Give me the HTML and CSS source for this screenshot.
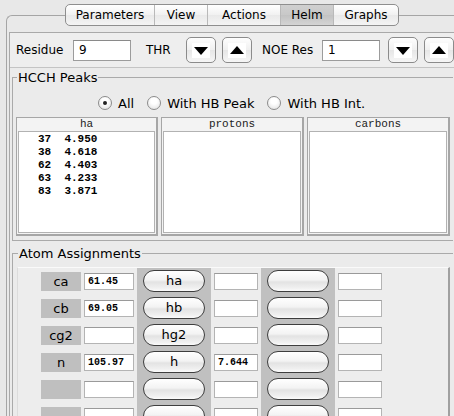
FILE: index.html
```html
<!DOCTYPE html>
<html>
<head>
<meta charset="utf-8">
<link rel="stylesheet" href="styles.css">
</head>
<body>
<div class="app">
  <div class="tabs">
    <div class="tab t-param">Parameters</div>
    <div class="tab t-view">View</div>
    <div class="tab t-act">Actions</div>
    <div class="tab t-helm sel">Helm</div>
    <div class="tab t-graph">Graphs</div>
  </div>
  <div class="pane">
    <div class="inner">
      <div class="resrow">
        <span class="lbl l-res">Residue</span>
        <div class="field big">9</div>
        <span class="lbl l-thr">THR</span>
        <button class="arr"><svg width="18" height="15" viewBox="0 0 18 15"><rect width="18" height="15" fill="#fff"/><polygon points="2,4 16,4 9,12" fill="#000"/></svg></button>
        <button class="arr"><svg width="18" height="15" viewBox="0 0 18 15"><rect width="18" height="15" fill="#fff"/><polygon points="2,11 16,11 9,3" fill="#000"/></svg></button>
        <span class="lbl l-noe">NOE Res</span>
        <div class="field big">1</div>
        <button class="arr arr-wide"><svg width="18" height="15" viewBox="0 0 18 15"><rect width="18" height="15" fill="#fff"/><polygon points="2,4 16,4 9,12" fill="#000"/></svg></button>
        <button class="arr arr-last"><svg width="18" height="15" viewBox="0 0 18 15"><rect width="18" height="15" fill="#fff"/><polygon points="2,11 16,11 9,3" fill="#000"/></svg></button>
      </div>

      <fieldset class="group hcch">
        <legend>HCCH Peaks</legend>
        <div class="radios">
          <label class="opt"><span class="radio on"></span>All</label>
          <label class="opt"><span class="radio"></span>With HB Peak</label>
          <label class="opt"><span class="radio"></span>With HB Int.</label>
        </div>
        <div class="tables">
          <div class="tbl">
            <div class="th">ha</div>
            <div class="list">
              <div class="li">37  4.950</div>
              <div class="li">38  4.618</div>
              <div class="li">62  4.403</div>
              <div class="li">63  4.233</div>
              <div class="li">83  3.871</div>
            </div>
          </div>
          <div class="tbl">
            <div class="th">protons</div>
            <div class="list"></div>
          </div>
          <div class="tbl">
            <div class="th">carbons</div>
            <div class="list"></div>
          </div>
        </div>
      </fieldset>

      <fieldset class="group atoms">
        <legend>Atom Assignments</legend>
        <div class="scroll">
          <div class="agrid">
            <div class="albl">ca</div><div class="cell"><div class="af">61.45</div></div><div class="gcol"><button class="pill">ha</button></div><div class="cell"><div class="af"></div></div><div class="gcol"><button class="pill"></button></div><div class="cell"><div class="af"></div></div>
            <div class="albl">cb</div><div class="cell"><div class="af">69.05</div></div><div class="gcol"><button class="pill">hb</button></div><div class="cell"><div class="af"></div></div><div class="gcol"><button class="pill"></button></div><div class="cell"><div class="af"></div></div>
            <div class="albl">cg2</div><div class="cell"><div class="af"></div></div><div class="gcol"><button class="pill">hg2</button></div><div class="cell"><div class="af"></div></div><div class="gcol"><button class="pill"></button></div><div class="cell"><div class="af"></div></div>
            <div class="albl">n</div><div class="cell"><div class="af">105.97</div></div><div class="gcol"><button class="pill">h</button></div><div class="cell"><div class="af">7.644</div></div><div class="gcol"><button class="pill"></button></div><div class="cell"><div class="af"></div></div>
            <div class="albl"></div><div class="cell"><div class="af"></div></div><div class="gcol"><button class="pill"></button></div><div class="cell"><div class="af"></div></div><div class="gcol"><button class="pill"></button></div><div class="cell"><div class="af"></div></div>
            <div class="albl"></div><div class="cell"><div class="af"></div></div><div class="gcol"><button class="pill"></button></div><div class="cell"><div class="af"></div></div><div class="gcol"><button class="pill"></button></div><div class="cell"><div class="af"></div></div>
          </div>
        </div>
      </fieldset>
    </div>
  </div>
</div>
</body>
</html>
```

FILE: styles.css
```css
* { box-sizing: border-box; }
html, body { margin: 0; padding: 0; }
body {
  width: 454px;
  height: 416px;
  overflow: hidden;
  background: #e8e8e8;
  font-family: "DejaVu Sans", "Liberation Sans", sans-serif;
  color: #000;
}
.app { width: 454px; height: 416px; overflow: hidden; padding-top: 4px; }

/* tabs */
.tabs {
  position: relative;
  z-index: 1;
  display: flex;
  margin-left: 65px;
  width: 334px;
  height: 22px;
  border: 1px solid #8e8e8e;
  border-radius: 5px;
  overflow: hidden;
  background: linear-gradient(#ffffff, #f1f1f1 50%, #e9e9e9 51%, #f4f4f4);
}
.tab {
  display: flex;
  align-items: center;
  justify-content: center;
  font-size: 12px;
  border-left: 1px solid #b9b9b9;
  padding-bottom: 1px;
}
.tab:first-child { border-left: none; }
.t-param { width: 88px; }
.t-view { width: 53px; }
.t-act { width: 73px; }
.t-helm { width: 53px; }
.t-graph { width: 65px; }
.tab.sel { background: linear-gradient(#d0d0d0, #c8c8c8 50%, #c2c2c2 51%, #d4d4d4); }

/* pane */
.pane {
  margin-top: -11px;
  margin-left: 6px;
  height: 404px;
  border: 1px solid #a5a5a5;
  border-right: none;
  border-bottom: none;
  border-radius: 6px 0 0 0;
  background: #e9e9e9;
  padding: 16px 0 0 2px;
}
.inner {
  height: 387px;
  border-top: 1px solid #a9a9a9;
  border-left: 1px solid #a9a9a9;
  background: #ebebeb;
}
.resrow {
  display: flex;
  align-items: center;
  height: 35px;
  padding-left: 6px;
  border-bottom: 1px solid #c4c4c4;
  background: #eeeeee;
}
.lbl { font-size: 12px; }
.l-res { width: 57px; }
.l-thr { width: 55px; padding-left: 15px; }
.l-noe { width: 64px; padding-left: 4px; }
.field {
  height: 21px;
  border: 1px solid #9c9c9c;
  border-top-color: #8a8a8a;
  background: #fff;
  font-size: 12px;
  line-height: 19px;
  padding-left: 5px;
}
.field.big { width: 58px; }
.arr {
  flex: none;
  width: 30px;
  height: 26px;
  margin: 0 6px 0 0;
  padding: 0;
  border: 1px solid #8b8b8b;
  border-radius: 5px;
  background: linear-gradient(#fefefe, #f0f0f0 50%, #e6e6e6 51%, #f6f6f6);
  display: flex;
  align-items: center;
  justify-content: center;
}
.arr svg { display: block; }
.arr-wide { margin-left: 8px; }
.arr-last { margin-right: 0; }

/* groups */
.group {
  margin: 2px 0 0 2px;
  width: 441px;
  min-width: 0;
  border: 1px solid #aaaaaa;
  border-right: none;
  padding: 10px 0 4px 3px;
}
.group legend {
  font-size: 13px;
  line-height: 15px;
  padding: 0 1px;
  margin-left: 1px;
}
.atoms { margin-top: 5px; padding-top: 6px; padding-left: 4px; padding-bottom: 0; border-bottom: none; }

.radios {
  display: flex;
  align-items: center;
  height: 16px;
  padding-left: 82px;
  font-size: 13px;
}
.opt { display: flex; align-items: center; gap: 6px; margin-right: 13px; }
.radio {
  width: 14px;
  height: 14px;
  border-radius: 50%;
  border: 1px solid #8c8c8c;
  background: radial-gradient(circle at 50% 35%, #ffffff 30%, #dcdcdc 100%);
  display: flex;
  align-items: center;
  justify-content: center;
}
.radio.on::after {
  content: "";
  width: 4px;
  height: 4px;
  border-radius: 50%;
  background: #222;
}

.tables {
  display: grid;
  grid-template-columns: 142px 143px 143px;
  column-gap: 3px;
  margin-top: 6px;
  height: 119px;
}
.tbl {
  display: flex;
  flex-direction: column;
  border: 1px solid #a6a6a6;
  border-right-width: 2px;
  border-bottom-width: 2px;
  background: #f3f3f3;
  padding: 0 1px 1px 1px;
}
.th {
  height: 13px;
  font-family: "Liberation Mono", monospace;
  font-size: 11px;
  line-height: 13px;
  text-align: center;
  color: #222;
}
.list {
  flex: 1;
  background: #fff;
  border: 1px solid #b2b2b2;
  padding: 1px 0 0 19px;
}
.li {
  font-family: "Liberation Mono", monospace;
  font-weight: bold;
  font-size: 11px;
  line-height: 13px;
  white-space: pre;
}

/* atom assignments */
.scroll {
  width: 433px;
  height: 160px;
  border-top: 1px solid #fafafa;
  border-left: 1px solid #dcdcdc;
  border-right: 2px solid #a0a0a0;
  background: #ededed;
  padding-left: 23px;
}
.agrid {
  display: grid;
  grid-template-columns: 40px 50px 74px 44px 74px 44px;
  grid-auto-rows: 27px;
  column-gap: 3px;
}
.albl {
  align-self: center;
  height: 19px;
  background: #bfbfbf;
  font-size: 13px;
  line-height: 19px;
  text-align: center;
  margin-top: -1px;
}
.cell { display: flex; align-items: center; }
.af {
  width: 100%;
  height: 17px;
  background: #fff;
  border: 1px solid #b4b4b4;
  border-top-color: #9a9a9a;
  font-family: "Liberation Mono", monospace;
  font-weight: bold;
  font-size: 10px;
  line-height: 15px;
  padding-left: 3px;
}
.gcol {
  background: #c0c0c0;
  display: flex;
  align-items: center;
  justify-content: center;
}
.pill {
  width: 62px;
  height: 22px;
  margin: -1px 0 0 0;
  padding: 0 0 1px 0;
  border: 1px solid #3e3e3e;
  border-radius: 11px;
  background: linear-gradient(#ffffff, #f3f3f3 45%, #e3e3e3 55%, #f0f0f0 85%, #fbfbfb);
  font-family: "DejaVu Sans", sans-serif;
  font-size: 13px;
  color: #000;
}
```
